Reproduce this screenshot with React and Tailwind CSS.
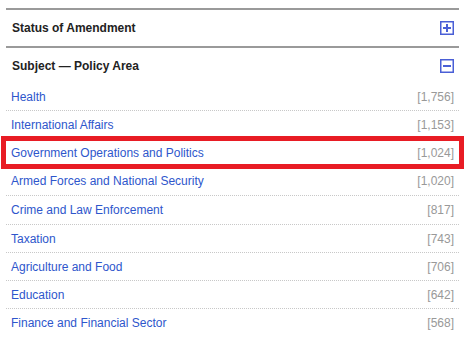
import React from "react";

const items = [
  ["Health", "1,756", "h-[28px]"],
  ["International Affairs", "1,153", "h-[28px]"],
  ["Government Operations and Politics", "1,024", "h-[28px]", true],
  ["Armed Forces and National Security", "1,020", "h-[29px]"],
  ["Crime and Law Enforcement", "817", "h-[29px]"],
  ["Taxation", "743", "h-[28px]"],
  ["Agriculture and Food", "706", "h-[28px]"],
  ["Education", "642", "h-[28px]"],
  ["Finance and Financial Sector", "568", "h-[28px]"],
];

function Toggle({ open }) {
  return (
    <svg width="14" height="14" viewBox="0 0 14 14" className="block">
      <rect x="0.75" y="0.75" width="12.5" height="12.5" fill="white" stroke="#4a5fd6" strokeWidth="1.5" />
      <rect x="3" y="6" width="8" height="2" fill="#4a5fd6" />
      {!open && <rect x="6" y="3" width="2" height="8" fill="#4a5fd6" />}
    </svg>
  );
}

export default function App() {
  return (
    <div
      className="bg-white w-[472px] h-[344px] overflow-hidden pt-[8px] pl-[6px]"
      style={{ fontFamily: '"Liberation Sans", Arial, sans-serif' }}
    >
      <div className="w-[453px]">
        <div className="border-t-2 border-[#9a9a9a] h-[38px] flex items-center justify-between pl-[6px] pr-[5px]">
          <span className="text-[12px] font-bold text-[#222]">Status of Amendment</span>
          <Toggle open={false} />
        </div>
        <div className="border-t-2 border-[#9a9a9a] h-[37px] flex items-center justify-between pl-[6px] pr-[5px]">
          <span className="text-[12px] font-bold text-[#222]">Subject — Policy Area</span>
          <Toggle open={true} />
        </div>
        <ul>
          {items.map(([name, count, h, hl], i) => (
            <li
              key={name}
              className={
                "relative flex items-center justify-between pl-[5px] pr-[5px] " +
                h +
                " " +
                (i < items.length - 1 ? "border-b border-dotted border-[#c8c8c8]" : "")
              }
            >
              <a className="text-[12px] text-[#2e56cc]">{name}</a>
              <span className="text-[12px] text-[#999]">[{count}]</span>
              {hl && (
                <div className="absolute -left-[5px] -right-[5px] -top-[3px] -bottom-[3px] border-[5px] border-[#e81c24]" />
              )}
            </li>
          ))}
        </ul>
      </div>
    </div>
  );
}
